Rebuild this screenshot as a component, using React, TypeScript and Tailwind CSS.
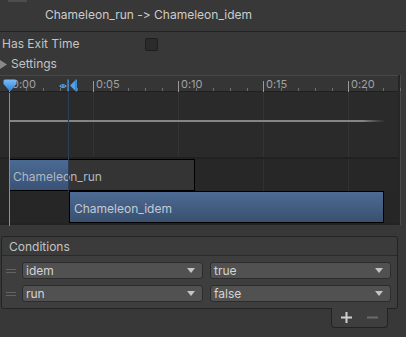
import React from 'react';

const PX_PER_SEC = 16.96;
const T0 = 9.5;

function Ruler() {
  const ticks = Array.from({ length: 24 }, (_, s) => s);
  return (
    <div className="relative h-[16px] bg-[#353535] border-b border-[#1f1f1f]">
      {ticks.map((s) => {
        const x = T0 + s * PX_PER_SEC;
        if (s % 5 === 0) {
          return (
            <React.Fragment key={s}>
              <div className="absolute top-[5px] h-[11px] w-px bg-[#9a9a9a]" style={{ left: Math.round(x) - 1 }} />
              <span
                className="absolute top-[2px] text-[11px] leading-[13px] text-[#a2a2a2]"
                style={{ left: Math.round(x) + 2 }}
              >
                0:{String(s).padStart(2, '0')}
              </span>
            </React.Fragment>
          );
        }
        return <div key={s} className="absolute top-[12px] h-[3px] w-px bg-[#6e6e6e]" style={{ left: Math.round(x) }} />;
      })}
      {/* playhead marker */}
      <svg className="absolute left-[3px] top-[3px]" width="14" height="13" viewBox="0 0 14 13">
        <defs>
          <linearGradient id="mk" x1="0" y1="0" x2="0" y2="1">
            <stop offset="0" stopColor="#7bbcf7" />
            <stop offset="1" stopColor="#2f7fd6" />
          </linearGradient>
        </defs>
        <path d="M0.5 2 Q0.5 0.5 2 0.5 H12 Q13.5 0.5 13.5 2 V5 L7 12.5 L0.5 5 Z" fill="url(#mk)" />
      </svg>
      {/* transition start marker */}
      <svg className="absolute left-[59px] top-[3px]" width="19" height="13" viewBox="0 0 19 13">
        <path d="M1 7 Q4 4 7 7 Q4 10 1 7 Z" fill="none" stroke="#4ea3f0" strokeWidth="1.1" />
        <circle cx="4" cy="7" r="1" fill="#4ea3f0" />
        <rect x="8.5" y="0.5" width="1.2" height="12" fill="#4ea3f0" />
        <path d="M16.5 1 V12 L11 6.5 Z" fill="#4ea3f0" />
        <rect x="16.6" y="0.5" width="1.2" height="12" fill="#4ea3f0" />
      </svg>
    </div>
  );
}

function Dropdown({ label, width }: { label: string; width: string }) {
  return (
    <div
      className={`${width} h-[17px] flex items-center justify-between rounded-[3px] bg-[#515151] border border-[#2c2c2c] pl-[3px] pr-[7px] text-[12px] leading-[15px] text-[#d4d4d4]`}
    >
      <span>{label}</span>
      <svg width="8" height="5" viewBox="0 0 8 5">
        <path d="M0 0 H8 L4 5 Z" fill="#c4c4c4" />
      </svg>
    </div>
  );
}

function ConditionRow({ param, value }: { param: string; value: string }) {
  return (
    <div className="flex items-center h-[17px]">
      <div className="ml-[4px] w-[10px] flex flex-col gap-[2px]">
        <div className="h-px bg-[#636363]" />
        <div className="h-px bg-[#636363]" />
      </div>
      <div className="ml-[6px]">
        <Dropdown label={param} width="w-[181px]" />
      </div>
      <div className="ml-[7px]">
        <Dropdown label={value} width="w-[181px]" />
      </div>
    </div>
  );
}

export default function App() {
  return (
    <div className="w-[406px] h-[337px] overflow-hidden bg-[#383838] font-['Inter','Noto_Sans',sans-serif] [font-feature-settings:'calt'_0,'liga'_0] text-[#c4c4c4]">
      <div className="ml-[8px] w-[19px] h-[2px] bg-[#4d4d4d]" />
      <div className="h-[29px] pt-[5px] pl-[45px] text-[12px] leading-[15px] text-[#cccccc]">
        Chameleon_run -&gt; Chameleon_idem
      </div>
      <div className="h-px bg-[#212121]" />

      <div className="mt-[3px] h-[18px] flex items-center text-[12px]">
        <span className="pl-[2px] w-[145px]">Has Exit Time</span>
        <div className="w-[13px] h-[13px] rounded-[2px] bg-[#2b2b2b] border border-[#1e1e1e]" />
      </div>
      <div className="mt-[2px] h-[18px] flex items-center text-[12px]">
        <svg width="8" height="9" viewBox="0 0 8 9" className="mr-[3px]">
          <path d="M0 0 L7 4.5 L0 9 Z" fill="#8a8a8a" />
        </svg>
        <span>Settings</span>
      </div>

      {/* timeline */}
      <div className="mt-[2px] flex">
        <div className="relative w-[398px] border-t border-[#484848]">
          <Ruler />
          <div className="relative h-[65px] bg-[#2a2a2a]">
            {[5, 10, 15, 20].map((s) => (
              <div
                key={s}
                className="absolute top-0 bottom-0 w-px bg-[#343434]"
                style={{ left: Math.round(T0 + s * PX_PER_SEC) - 1 }}
              />
            ))}
            <div className="absolute left-[9px] top-[28px] h-[2px] w-[376px] bg-gradient-to-r from-[#858585] from-[94%] to-[#2a2a2a]" />
          </div>
          <div className="h-[2px] bg-[#212121]" />
          <div className="relative h-[32px] bg-[#272727] flex">
            {[15, 20].map((s) => (
              <div
                key={s}
                className="absolute top-0 bottom-0 w-px bg-[#313131]"
                style={{ left: Math.round(T0 + s * PX_PER_SEC) - 1 }}
              />
            ))}
            <div className="relative ml-[9px] w-[186px] h-[32px] flex border-y border-r border-black bg-[#343434]">
              <div className="w-[60px] bg-gradient-to-b from-[#4b6a93] to-[#3a5377]" />
              <span className="absolute left-[4px] top-[9px] text-[12px] leading-[15px] text-[#b3b8c0]">Chameleon_run</span>
            </div>
          </div>
          <div className="h-[32px] bg-[#262626] flex">
            <div className="ml-[69px] w-[315px] h-[32px] border border-black bg-gradient-to-b from-[#4d6b94] to-[#39506f] pl-[4px] pt-[9px] text-[12px] leading-[15px] text-[#c2cad6]">
              Chameleon_idem
            </div>
          </div>
          <div className="h-[2px] bg-[#232323]" />

          {/* vertical guides */}
          <div className="absolute left-[9px] top-[17px] h-[133px] w-px bg-[#8e8e8e]" />
          <div className="absolute left-[68px] top-[17px] h-[99px] w-px bg-[#2f3e54]" />
        </div>
        <div className="w-[2px] bg-[#262626]" />
        <div className="w-px bg-[#4a4a4a]" />
      </div>

      {/* conditions */}
      <div className="mt-[11px] ml-px w-[397px] rounded-[3px] border border-[#232323]">
        <div className="h-[19px] flex items-center pl-[7px] pt-[2px] bg-[#3b3b3b] border-b border-[#2a2a2a] rounded-t-[3px] text-[12px]">
          Conditions
        </div>
        <div className="bg-[#3e3e3e] pt-[6px] pb-[6px] flex flex-col gap-[6px] rounded-b-[3px]">
          <ConditionRow param="idem" value="true" />
          <ConditionRow param="run" value="false" />
        </div>
      </div>
      <div className="relative z-10 -mt-px ml-[331px] w-[57px] h-[20px] flex items-center bg-[#3e3e3e] border border-t-0 border-[#232323] rounded-b-[4px]">
        <svg className="ml-[9px]" width="11" height="11" viewBox="0 0 11 11">
          <rect x="4.5" y="0" width="2" height="11" fill="#cfcfcf" />
          <rect x="0" y="4.5" width="11" height="2" fill="#cfcfcf" />
        </svg>
        <svg className="ml-[15px]" width="11" height="11" viewBox="0 0 11 11">
          <rect x="0" y="4.5" width="11" height="2" fill="#6a6a6a" />
        </svg>
      </div>
    </div>
  );
}
